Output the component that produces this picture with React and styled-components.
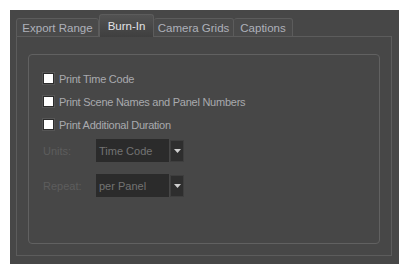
import React from "react";
import styled, { createGlobalStyle } from "styled-components";

const Global = createGlobalStyle`
  html, body { margin: 0; padding: 0; background: #ffffff; }
  body { font-family: "Liberation Sans", Arial, sans-serif; }
`;

const Window = styled.div`
  margin: 10px;
  width: 389px;
  height: 254px;
  box-sizing: border-box;
  background: #474747;
  padding: 5px 7px 8px 6px;
  display: flex;
  flex-direction: column;
`;

const TabBar = styled.div`
  display: flex;
  align-items: flex-end;
  height: 22px;
  position: relative;
  z-index: 1;
  margin-bottom: -1px;
`;

const Tab = styled.div`
  box-sizing: border-box;
  width: ${(p) => p.$w}px;
  height: ${(p) => (p.$active ? 23 : 19)}px;
  display: flex;
  align-items: center;
  justify-content: center;
  font-size: 11.5px;
  color: ${(p) => (p.$active ? "#e2e2e6" : "#aeb1ba")};
  background: ${(p) =>
    p.$active ? "linear-gradient(#525252, #3f3f3f)" : "#4a4a4a"};
  border: 1px solid #5c5c5c;
  border-left: ${(p) => (p.$first || p.$active ? "1px solid #5c5c5c" : "none")};
  border-bottom: ${(p) => (p.$active ? "none" : "1px solid #5c5c5c")};
  border-radius: 3px 3px 0 0;
  padding-top: ${(p) => (p.$active ? 0 : 1)}px;
`;

const Pane = styled.div`
  flex: 1;
  border: 1px solid #5c5c5c;
  background: #474747;
  padding: 17px 11px 11px 11px;
  display: flex;
`;

const Group = styled.div`
  flex: 1;
  border: 1px solid #616161;
  border-radius: 4px;
  padding: 12px 14px 0 14px;
  display: flex;
  flex-direction: column;
`;

const CheckRow = styled.div`
  height: 23px;
  display: flex;
  align-items: center;
  gap: 5px;
  font-size: 11px;
  letter-spacing: -0.25px;
  color: #a9aaae;
`;

const Box = styled.span`
  width: 11px;
  height: 11px;
  box-sizing: border-box;
  background: #ffffff;
  border: 1px solid #2c2c2c;
  outline: 1px solid #555;
`;

const FieldRow = styled.div`
  height: 23px;
  display: flex;
  align-items: center;
  margin-top: ${(p) => p.$mt}px;
`;

const Label = styled.span`
  width: 53px;
  font-size: 11px;
  color: #5d5d5d;
`;

const Combo = styled.div`
  display: flex;
  height: 23px;
  gap: 1px;
`;

const ComboField = styled.div`
  width: 73px;
  background: #2b2b2b;
  color: #737373;
  font-size: 11px;
  display: flex;
  align-items: center;
  padding-left: 3px;
  box-sizing: border-box;
`;

const ComboBtn = styled.div`
  width: 14px;
  height: 22px;
  margin-top: 1px;
  box-sizing: border-box;
  background: #2e2e2e;
  border: 1px solid #3e3e3e;
  display: flex;
  align-items: center;
  justify-content: center;
`;

const Arrow = () => (
  <svg width="7" height="4" viewBox="0 0 7 4">
    <path d="M0 0 H7 L3.5 4 Z" fill="#cfcfcf" />
  </svg>
);

const tabs = [
  { t: "Export Range", w: 83 },
  { t: "Burn-In", w: 55, active: true },
  { t: "Camera Grids", w: 80 },
  { t: "Captions", w: 59 },
];

export default function App() {
  return (
    <>
      <Global />
      <Window>
        <TabBar>
          {tabs.map((x, i) => (
            <Tab key={x.t} $w={x.w} $active={x.active} $first={i === 0}>
              {x.t}
            </Tab>
          ))}
        </TabBar>
        <Pane>
          <Group>
            {["Print Time Code", "Print Scene Names and Panel Numbers", "Print Additional Duration"].map((t) => (
              <CheckRow key={t}>
                <Box />
                {t}
              </CheckRow>
            ))}
            <FieldRow $mt={3}>
              <Label>Units:</Label>
              <Combo>
                <ComboField>Time Code</ComboField>
                <ComboBtn><Arrow /></ComboBtn>
              </Combo>
            </FieldRow>
            <FieldRow $mt={12}>
              <Label>Repeat:</Label>
              <Combo>
                <ComboField>per Panel</ComboField>
                <ComboBtn><Arrow /></ComboBtn>
              </Combo>
            </FieldRow>
          </Group>
        </Pane>
      </Window>
    </>
  );
}
